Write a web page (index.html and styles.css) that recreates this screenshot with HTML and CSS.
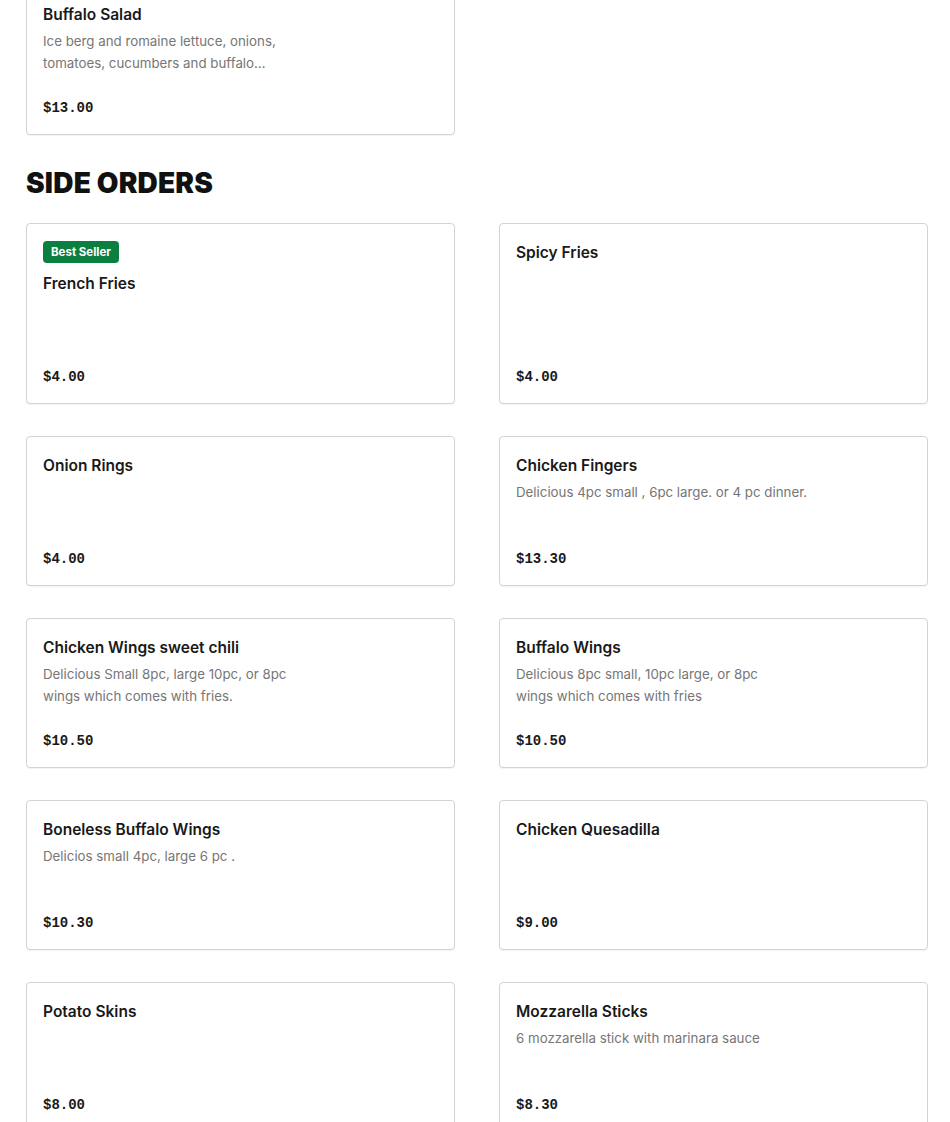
FILE: index.html
```html
<!DOCTYPE html>
<html>
<head>
<meta charset="utf-8">
<link rel="stylesheet" href="styles.css">
</head>
<body>
<main class="page">
  <section class="menu-section section-top">
    <div class="grid">
      <article class="card">
        <h3 class="item-title">Buffalo Salad</h3>
        <p class="item-desc clamp">Ice berg and romaine lettuce, onions, tomatoes, cucumbers and buffalo chicken with your choice of dressing</p>
        <div class="price">$13.00</div>
      </article>
    </div>
  </section>

  <section class="menu-section">
    <h2 class="section-title">SIDE ORDERS</h2>
    <div class="grid">
      <article class="card">
        <span class="badge">Best Seller</span>
        <h3 class="item-title">French Fries</h3>
        <p class="item-desc"></p>
        <div class="price">$4.00</div>
      </article>
      <article class="card">
        <h3 class="item-title">Spicy Fries</h3>
        <p class="item-desc"></p>
        <div class="price">$4.00</div>
      </article>
      <article class="card">
        <h3 class="item-title">Onion Rings</h3>
        <p class="item-desc"></p>
        <div class="price">$4.00</div>
      </article>
      <article class="card">
        <h3 class="item-title">Chicken Fingers</h3>
        <p class="item-desc">Delicious 4pc small , 6pc large. or 4 pc dinner.</p>
        <div class="price">$13.30</div>
      </article>
      <article class="card">
        <h3 class="item-title">Chicken Wings sweet chili</h3>
        <p class="item-desc">Delicious Small 8pc, large 10pc, or 8pc<br>wings which comes with fries.</p>
        <div class="price">$10.50</div>
      </article>
      <article class="card">
        <h3 class="item-title">Buffalo Wings</h3>
        <p class="item-desc">Delicious 8pc small, 10pc large, or 8pc<br>wings which comes with fries</p>
        <div class="price">$10.50</div>
      </article>
      <article class="card">
        <h3 class="item-title">Boneless Buffalo Wings</h3>
        <p class="item-desc">Delicios small 4pc, large 6 pc .</p>
        <div class="price">$10.30</div>
      </article>
      <article class="card">
        <h3 class="item-title">Chicken Quesadilla</h3>
        <p class="item-desc"></p>
        <div class="price">$9.00</div>
      </article>
      <article class="card">
        <h3 class="item-title">Potato Skins</h3>
        <p class="item-desc"></p>
        <div class="price">$8.00</div>
      </article>
      <article class="card">
        <h3 class="item-title">Mozzarella Sticks</h3>
        <p class="item-desc">6 mozzarella stick with marinara sauce</p>
        <div class="price">$8.30</div>
      </article>
    </div>
  </section>
</main>
</body>
</html>
```

FILE: styles.css
```css
* { box-sizing: border-box; }

html, body {
  margin: 0;
  padding: 0;
  background: #ffffff;
}

body {
  font-family: "Inter", "Liberation Sans", sans-serif;
  color: #191919;
  overflow: hidden;
}

.page {
  padding: 0 22px 0 26px;
}

.section-top {
  margin-top: -15px;
}

.section-title {
  margin: 32px 0 24px;
  font-family: "Inter", "Liberation Sans", sans-serif;
  font-weight: 900;
  font-size: 28px;
  line-height: 32px;
  letter-spacing: 0.2px;
  color: #111111;
}

.grid {
  display: grid;
  grid-template-columns: 1fr 1fr;
  column-gap: 44px;
  row-gap: 32px;
}

.card {
  display: flex;
  flex-direction: column;
  align-items: flex-start;
  border: 1px solid #d3d3d3;
  border-radius: 4px;
  padding: 17px 16px 16px;
  background: #fff;
  box-shadow: 0 1px 1px rgba(0, 0, 0, 0.05);
}

.badge {
  display: inline-block;
  background: #0b7f40;
  color: #ffffff;
  font-size: 11.5px;
  font-weight: 700;
  line-height: 22px;
  height: 22px;
  padding: 0 8px;
  border-radius: 4px;
  margin-bottom: 9px;
}

.item-title {
  margin: 0 0 3px;
  font-size: 15.5px;
  font-weight: 600;
  line-height: 24px;
  color: #191919;
}

.item-desc {
  margin: 0;
  min-height: 44px;
  max-width: 300px;
  font-size: 13.3px;
  line-height: 22px;
  color: #767676;
}

.clamp {
  display: -webkit-box;
  -webkit-line-clamp: 2;
  -webkit-box-orient: vertical;
  overflow: hidden;
  max-width: 242px;
}

.price {
  margin-top: auto;
  padding-top: 24px;
  font-family: "Liberation Mono", "DejaVu Sans Mono", monospace;
  font-weight: 700;
  font-size: 14px;
  line-height: 20px;
  color: #191919;
}
```
